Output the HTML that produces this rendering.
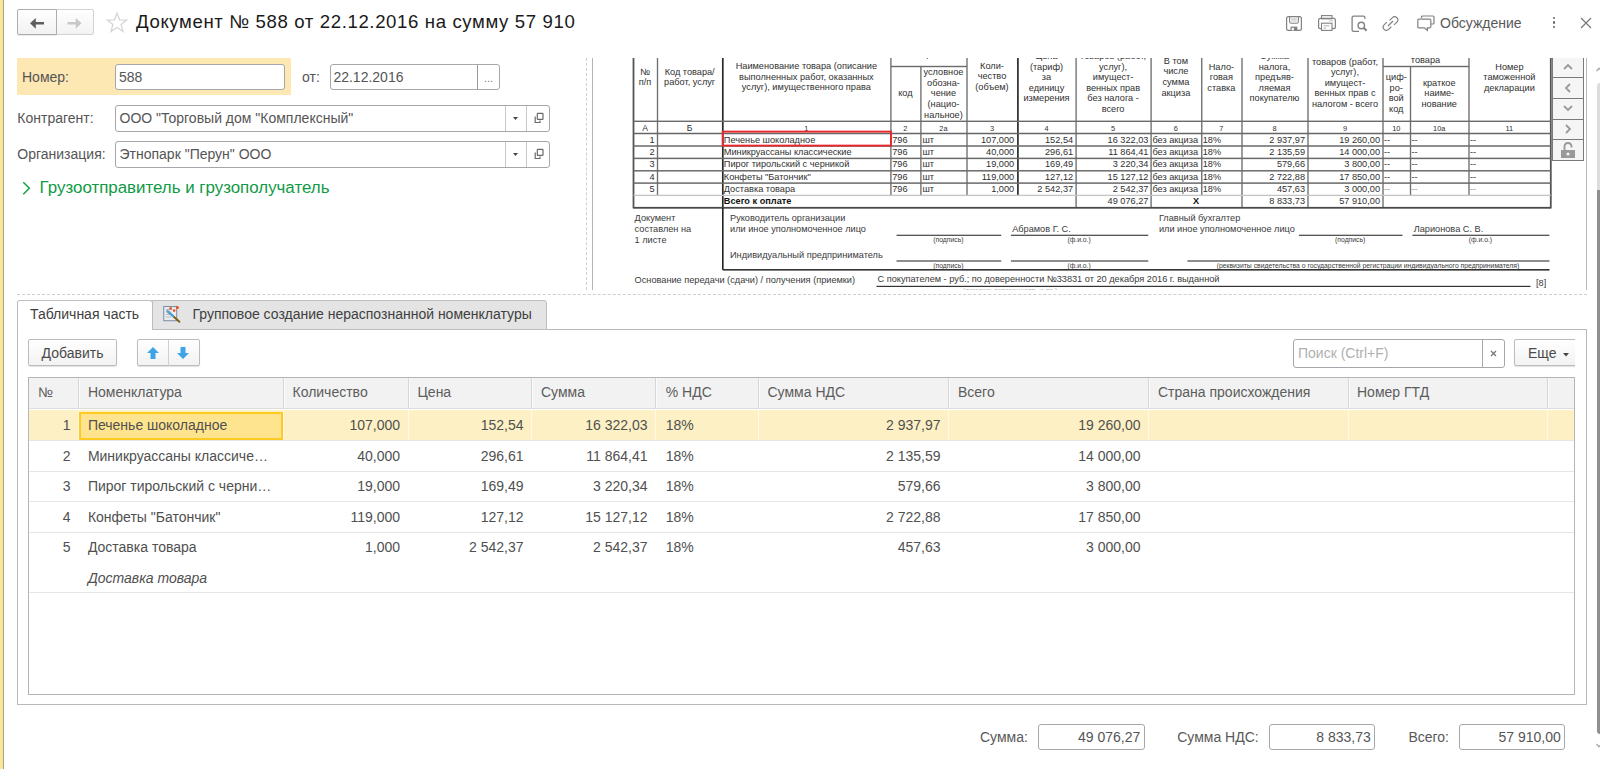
<!DOCTYPE html>
<html><head><meta charset="utf-8"><title>1C</title>
<style>
html,body{margin:0;padding:0;width:1600px;height:769px;overflow:hidden;background:#fff;}
body{position:relative;font-family:"Liberation Sans",sans-serif;}
.t{position:absolute;white-space:nowrap;}
.r{position:absolute;}
svg.r{display:block;overflow:visible;}
</style></head><body>
<div class="r" style="left:0.00px;top:0.00px;width:3.00px;height:769.00px;background:#fae796;"></div>
<div class="r" style="left:3.00px;top:0.00px;width:1.00px;height:769.00px;background:#a9a390;"></div>
<div class="r" style="left:55.50px;top:9.00px;width:38.50px;height:26.00px;border:1px solid #d2d2d2;background:linear-gradient(#ffffff,#f3f3f3);border-radius:2px;box-sizing:border-box;border-radius:0 2px 2px 0"></div>
<div class="r" style="left:17.00px;top:9.00px;width:40.00px;height:26.00px;border:1px solid #adadad;background:linear-gradient(#ffffff,#f1f1f1);border-radius:2px;box-sizing:border-box;border-radius:2px 0 0 2px;box-shadow:0 1px 0 rgba(0,0,0,0.08)"></div>
<svg class="r" style="left:29.8px;top:17.6px" width="15" height="11" viewBox="0 0 15 11"><path d="M0 5.3 L5.8 0 L5.8 4 L14 4 L14 6.6 L5.8 6.6 L5.8 10.7 Z" fill="#5e5e5e"/></svg>
<svg class="r" style="left:67px;top:17.6px" width="15" height="11" viewBox="0 0 15 11"><path d="M14.5 5.3 L8.7 0 L8.7 4 L0.5 4 L0.5 6.6 L8.7 6.6 L8.7 10.7 Z" fill="#c8c8c8"/></svg>
<svg class="r" style="left:106px;top:12px" width="22" height="21" viewBox="0 0 22 21"><path d="M11 1.2 L13.6 7.8 L20.6 8.1 L15.1 12.5 L17 19.4 L11 15.5 L5 19.4 L6.9 12.5 L1.4 8.1 L8.4 7.8 Z" fill="none" stroke="#d6d6d6" stroke-width="1.3"/></svg>
<div class="t" style="left:136.00px;top:13.36px;font-size:18.6px;line-height:18.6px;color:#1a1a1a;font-weight:normal;font-style:normal;letter-spacing:0.62px">Документ № 588 от 22.12.2016 на сумму 57 910</div>
<svg class="r" style="left:1286px;top:16px" width="16" height="15" viewBox="0 0 16 15"><rect x="0.6" y="0.6" width="14.8" height="13.8" rx="1.9" fill="none" stroke="#828282" stroke-width="1.2"/><path d="M3.6 0.6 V5.4 Q3.6 7.2 5.4 7.2 H10.6 Q12.4 7.2 12.4 5.4 V0.6" fill="none" stroke="#828282" stroke-width="1.1"/><rect x="5.2" y="2.4" width="5.6" height="1.2" fill="#bbb"/><rect x="5.2" y="4.6" width="5.6" height="0.9" fill="#bbb"/><rect x="4.6" y="10.6" width="6.8" height="3.8" fill="#828282"/><rect x="5.7" y="11.8" width="2.2" height="2.6" fill="#fff"/></svg>
<svg class="r" style="left:1318px;top:15px" width="18" height="16" viewBox="0 0 18 16"><rect x="3.5" y="0.6" width="10.5" height="3.2" fill="none" stroke="#828282" stroke-width="1.1"/><rect x="0.6" y="3.4" width="16.8" height="10.3" rx="1.9" fill="none" stroke="#828282" stroke-width="1.2"/><rect x="3.5" y="8.2" width="10.5" height="7.2" fill="#fff" stroke="#828282" stroke-width="1.1"/><rect x="5.5" y="10.4" width="6" height="0.9" fill="#aaa"/><rect x="5.5" y="12.7" width="2.6" height="0.9" fill="#aaa"/><rect x="11.2" y="5.4" width="4" height="0.9" fill="#bbb"/></svg>
<svg class="r" style="left:1351px;top:14.8px" width="18" height="18" viewBox="0 0 18 18"><path d="M8 16.4 H2.5 Q1.1 16.4 1.1 15 V2.6 Q1.1 1.2 2.5 1.2 H12.5 Q13.9 1.2 13.9 2.6 V4" fill="none" stroke="#828282" stroke-width="1.3"/><circle cx="10.3" cy="10.5" r="3.2" fill="none" stroke="#828282" stroke-width="1.4"/><path d="M12.6 12.8 L15.6 15.8" stroke="#828282" stroke-width="2"/></svg>
<svg class="r" style="left:1382px;top:14.6px" width="17" height="17" viewBox="0 0 17 17"><path d="M7.6 5.4 L10.2 2.8 Q12.6 0.4 14.9 2.7 Q17.1 4.9 14.7 7.3 L12.1 9.9" fill="none" stroke="#828282" stroke-width="1.2"/><path d="M9.4 11.6 L6.8 14.2 Q4.4 16.6 2.1 14.3 Q-0.1 12.1 2.3 9.7 L4.9 7.1" fill="none" stroke="#828282" stroke-width="1.2"/><path d="M6 11 L11 6" stroke="#828282" stroke-width="1.2"/></svg>
<svg class="r" style="left:1417px;top:14.8px" width="18" height="17" viewBox="0 0 18 17"><path d="M4.5 3 V2 Q4.5 1 5.5 1 H16 Q17 1 17 2 V8 Q17 9 16 9 H14" fill="none" stroke="#828282" stroke-width="1.2"/><path d="M1.8 4.2 H12.8 Q13.8 4.2 13.8 5.2 V11.8 Q13.8 12.8 12.8 12.8 H10.3 L10.3 15.5 L7.3 12.8 H1.8 Q0.8 12.8 0.8 11.8 V5.2 Q0.8 4.2 1.8 4.2 Z" fill="none" stroke="#828282" stroke-width="1.2"/></svg>
<div class="t" style="left:1440.00px;top:15.95px;font-size:14px;line-height:14px;color:#595959;font-weight:normal;font-style:normal;">Обсуждение</div>
<div class="r" style="left:1552.5px;top:16.8px;width:2.6px;height:2.6px;border-radius:50%;background:#666"></div>
<div class="r" style="left:1552.5px;top:21.3px;width:2.6px;height:2.6px;border-radius:50%;background:#666"></div>
<div class="r" style="left:1552.5px;top:25.8px;width:2.6px;height:2.6px;border-radius:50%;background:#666"></div>
<svg class="r" style="left:1580px;top:17px" width="12" height="12" viewBox="0 0 12 12"><path d="M1 1 L11 11 M11 1 L1 11" stroke="#777" stroke-width="1.2"/></svg>
<div class="r" style="left:17.00px;top:58.00px;width:274.00px;height:37.00px;background:#fde7b2;"></div>
<div class="t" style="left:22.00px;top:70.15px;font-size:14px;line-height:14px;color:#555555;font-weight:normal;font-style:normal;">Номер:</div>
<div class="r" style="left:115.00px;top:64.00px;width:170.00px;height:26.00px;border:1px solid #a4a7ac;background:#fff;border-radius:3px;box-sizing:border-box;"></div>
<div class="t" style="left:119.00px;top:70.15px;font-size:14px;line-height:14px;color:#555;font-weight:normal;font-style:normal;">588</div>
<div class="t" style="left:302.00px;top:70.15px;font-size:14px;line-height:14px;color:#555555;font-weight:normal;font-style:normal;">от:</div>
<div class="r" style="left:330.00px;top:64.00px;width:170.00px;height:26.00px;border:1px solid #a4a7ac;background:#fff;border-radius:3px;box-sizing:border-box;"></div>
<div class="r" style="left:477.00px;top:65.00px;width:1.00px;height:24.00px;background:#9a9a9a;"></div>
<div class="t" style="left:333.40px;top:70.15px;font-size:14px;line-height:14px;color:#555555;font-weight:normal;font-style:normal;">22.12.2016</div>
<div class="t" style="left:88.50px;width:800px;text-align:center;top:72.69px;font-size:11px;line-height:11px;color:#777;font-weight:normal;font-style:normal;">...</div>
<div class="t" style="left:17.30px;top:110.75px;font-size:14px;line-height:14px;color:#555555;font-weight:normal;font-style:normal;">Контрагент:</div>
<div class="r" style="left:115.00px;top:105.00px;width:434.50px;height:26.50px;border:1px solid #a4a7ac;background:#fff;border-radius:3px;box-sizing:border-box;"></div>
<div class="r" style="left:505.00px;top:106.00px;width:1.00px;height:24.50px;background:#c8c8c8;"></div>
<div class="r" style="left:526.30px;top:106.00px;width:1.00px;height:24.50px;background:#c8c8c8;"></div>
<div class="t" style="left:119.50px;top:110.75px;font-size:14px;line-height:14px;color:#555555;font-weight:normal;font-style:normal;">ООО "Торговый дом "Комплексный"</div>
<svg class="r" style="left:513px;top:116.5px" width="5" height="3" viewBox="0 0 5 3"><path d="M0 0 H5 L2.5 3 Z" fill="#444"/></svg>
<svg class="r" style="left:532px;top:112px" width="12" height="12" viewBox="0 0 12 12"><path d="M3.2 4.6 V10.5 H8 V8.4" fill="none" stroke="#6a6a6a" stroke-width="1.2"/><rect x="5.3" y="1.4" width="5.7" height="6" rx="0.6" fill="none" stroke="#6a6a6a" stroke-width="1.2"/></svg>
<div class="t" style="left:17.30px;top:146.75px;font-size:14px;line-height:14px;color:#555555;font-weight:normal;font-style:normal;">Организация:</div>
<div class="r" style="left:115.00px;top:141.00px;width:434.50px;height:26.50px;border:1px solid #a4a7ac;background:#fff;border-radius:3px;box-sizing:border-box;"></div>
<div class="r" style="left:505.00px;top:142.00px;width:1.00px;height:24.50px;background:#c8c8c8;"></div>
<div class="r" style="left:526.30px;top:142.00px;width:1.00px;height:24.50px;background:#c8c8c8;"></div>
<div class="t" style="left:119.50px;top:146.75px;font-size:14px;line-height:14px;color:#555555;font-weight:normal;font-style:normal;">Этнопарк "Перун" ООО</div>
<svg class="r" style="left:513px;top:152.5px" width="5" height="3" viewBox="0 0 5 3"><path d="M0 0 H5 L2.5 3 Z" fill="#444"/></svg>
<svg class="r" style="left:532px;top:148px" width="12" height="12" viewBox="0 0 12 12"><path d="M3.2 4.6 V10.5 H8 V8.4" fill="none" stroke="#6a6a6a" stroke-width="1.2"/><rect x="5.3" y="1.4" width="5.7" height="6" rx="0.6" fill="none" stroke="#6a6a6a" stroke-width="1.2"/></svg>
<svg class="r" style="left:21px;top:180.5px" width="11" height="15" viewBox="0 0 11 15"><path d="M2.3 1.3 L8.3 7.3 L2.3 13.3" fill="none" stroke="#14a04a" stroke-width="1.5"/></svg>
<div class="t" style="left:39.60px;top:179.69px;font-size:16.9px;line-height:16.9px;color:#0f9a45;font-weight:normal;font-style:normal;">Грузоотправитель и грузополучатель</div>
<div class="r" style="left:586px;top:58px;width:0;height:232px;border-left:1px dashed #cfcfcf"></div>
<div class="r" style="left:592.00px;top:58.00px;width:1.00px;height:232.00px;background:#b4b4b4;"></div>
<div class="r" style="left:1586.00px;top:58.00px;width:1.00px;height:232.00px;background:#b9b9b9;"></div>
<div class="r" style="left:17px;top:294px;width:1570px;height:0;border-top:1px dashed #cfcfcf"></div>
<div class="r" style="left:593.5px;top:58px;width:992.5px;height:232px;overflow:hidden">
<div class="t" style="left:-348.50px;width:800px;text-align:center;top:9.51px;font-size:9.2px;line-height:9.2px;color:#303030;font-weight:normal;font-style:normal;">№</div>
<div class="t" style="left:-348.50px;width:800px;text-align:center;top:20.11px;font-size:9.2px;line-height:9.2px;color:#303030;font-weight:normal;font-style:normal;">п/п</div>
<div class="t" style="left:-303.85px;width:800px;text-align:center;top:9.71px;font-size:9.2px;line-height:9.2px;color:#303030;font-weight:normal;font-style:normal;">Код товара/</div>
<div class="t" style="left:-303.85px;width:800px;text-align:center;top:20.31px;font-size:9.2px;line-height:9.2px;color:#303030;font-weight:normal;font-style:normal;">работ, услуг</div>
<div class="t" style="left:-187.15px;width:800px;text-align:center;top:3.86px;font-size:9.2px;line-height:9.2px;color:#303030;font-weight:normal;font-style:normal;">Наименование товара (описание</div>
<div class="t" style="left:-187.15px;width:800px;text-align:center;top:14.51px;font-size:9.2px;line-height:9.2px;color:#303030;font-weight:normal;font-style:normal;">выполненных работ, оказанных</div>
<div class="t" style="left:-187.15px;width:800px;text-align:center;top:25.11px;font-size:9.2px;line-height:9.2px;color:#303030;font-weight:normal;font-style:normal;">услуг), имущественного права</div>
<div class="t" style="left:-88.10px;width:800px;text-align:center;top:31.36px;font-size:9.2px;line-height:9.2px;color:#303030;font-weight:normal;font-style:normal;">код</div>
<div class="t" style="left:-50.05px;width:800px;text-align:center;top:10.11px;font-size:9.2px;line-height:9.2px;color:#303030;font-weight:normal;font-style:normal;">условное</div>
<div class="t" style="left:-50.05px;width:800px;text-align:center;top:20.74px;font-size:9.2px;line-height:9.2px;color:#303030;font-weight:normal;font-style:normal;">обозна-</div>
<div class="t" style="left:-50.05px;width:800px;text-align:center;top:31.37px;font-size:9.2px;line-height:9.2px;color:#303030;font-weight:normal;font-style:normal;">чение</div>
<div class="t" style="left:-50.05px;width:800px;text-align:center;top:42.00px;font-size:9.2px;line-height:9.2px;color:#303030;font-weight:normal;font-style:normal;">(нацио-</div>
<div class="t" style="left:-50.05px;width:800px;text-align:center;top:52.63px;font-size:9.2px;line-height:9.2px;color:#303030;font-weight:normal;font-style:normal;">нальное)</div>
<div class="t" style="left:-1.55px;width:800px;text-align:center;top:3.86px;font-size:9.2px;line-height:9.2px;color:#303030;font-weight:normal;font-style:normal;">Коли-</div>
<div class="t" style="left:-1.55px;width:800px;text-align:center;top:14.49px;font-size:9.2px;line-height:9.2px;color:#303030;font-weight:normal;font-style:normal;">чество</div>
<div class="t" style="left:-1.55px;width:800px;text-align:center;top:25.12px;font-size:9.2px;line-height:9.2px;color:#303030;font-weight:normal;font-style:normal;">(объем)</div>
<div class="t" style="left:53.00px;width:800px;text-align:center;top:-6.09px;font-size:9.2px;line-height:9.2px;color:#303030;font-weight:normal;font-style:normal;">Цена</div>
<div class="t" style="left:53.00px;width:800px;text-align:center;top:4.54px;font-size:9.2px;line-height:9.2px;color:#303030;font-weight:normal;font-style:normal;">(тариф)</div>
<div class="t" style="left:53.00px;width:800px;text-align:center;top:15.17px;font-size:9.2px;line-height:9.2px;color:#303030;font-weight:normal;font-style:normal;">за</div>
<div class="t" style="left:53.00px;width:800px;text-align:center;top:25.80px;font-size:9.2px;line-height:9.2px;color:#303030;font-weight:normal;font-style:normal;">единицу</div>
<div class="t" style="left:53.00px;width:800px;text-align:center;top:36.43px;font-size:9.2px;line-height:9.2px;color:#303030;font-weight:normal;font-style:normal;">измерения</div>
<div class="t" style="left:119.60px;width:800px;text-align:center;top:-6.09px;font-size:9.2px;line-height:9.2px;color:#303030;font-weight:normal;font-style:normal;">товаров (работ,</div>
<div class="t" style="left:119.60px;width:800px;text-align:center;top:4.54px;font-size:9.2px;line-height:9.2px;color:#303030;font-weight:normal;font-style:normal;">услуг),</div>
<div class="t" style="left:119.60px;width:800px;text-align:center;top:15.17px;font-size:9.2px;line-height:9.2px;color:#303030;font-weight:normal;font-style:normal;">имущест-</div>
<div class="t" style="left:119.60px;width:800px;text-align:center;top:25.80px;font-size:9.2px;line-height:9.2px;color:#303030;font-weight:normal;font-style:normal;">венных прав</div>
<div class="t" style="left:119.60px;width:800px;text-align:center;top:36.43px;font-size:9.2px;line-height:9.2px;color:#303030;font-weight:normal;font-style:normal;">без налога -</div>
<div class="t" style="left:119.60px;width:800px;text-align:center;top:47.06px;font-size:9.2px;line-height:9.2px;color:#303030;font-weight:normal;font-style:normal;">всего</div>
<div class="t" style="left:182.42px;width:800px;text-align:center;top:-1.14px;font-size:9.2px;line-height:9.2px;color:#303030;font-weight:normal;font-style:normal;">В том</div>
<div class="t" style="left:182.42px;width:800px;text-align:center;top:9.49px;font-size:9.2px;line-height:9.2px;color:#303030;font-weight:normal;font-style:normal;">числе</div>
<div class="t" style="left:182.42px;width:800px;text-align:center;top:20.12px;font-size:9.2px;line-height:9.2px;color:#303030;font-weight:normal;font-style:normal;">сумма</div>
<div class="t" style="left:182.42px;width:800px;text-align:center;top:30.75px;font-size:9.2px;line-height:9.2px;color:#303030;font-weight:normal;font-style:normal;">акциза</div>
<div class="t" style="left:227.88px;width:800px;text-align:center;top:4.51px;font-size:9.2px;line-height:9.2px;color:#303030;font-weight:normal;font-style:normal;">Нало-</div>
<div class="t" style="left:227.88px;width:800px;text-align:center;top:15.14px;font-size:9.2px;line-height:9.2px;color:#303030;font-weight:normal;font-style:normal;">говая</div>
<div class="t" style="left:227.88px;width:800px;text-align:center;top:25.77px;font-size:9.2px;line-height:9.2px;color:#303030;font-weight:normal;font-style:normal;">ставка</div>
<div class="t" style="left:281.00px;width:800px;text-align:center;top:-6.09px;font-size:9.2px;line-height:9.2px;color:#303030;font-weight:normal;font-style:normal;">Сумма</div>
<div class="t" style="left:281.00px;width:800px;text-align:center;top:4.54px;font-size:9.2px;line-height:9.2px;color:#303030;font-weight:normal;font-style:normal;">налога,</div>
<div class="t" style="left:281.00px;width:800px;text-align:center;top:15.17px;font-size:9.2px;line-height:9.2px;color:#303030;font-weight:normal;font-style:normal;">предъяв-</div>
<div class="t" style="left:281.00px;width:800px;text-align:center;top:25.80px;font-size:9.2px;line-height:9.2px;color:#303030;font-weight:normal;font-style:normal;">ляемая</div>
<div class="t" style="left:281.00px;width:800px;text-align:center;top:36.43px;font-size:9.2px;line-height:9.2px;color:#303030;font-weight:normal;font-style:normal;">покупателю</div>
<div class="t" style="left:351.50px;width:800px;text-align:center;top:-0.49px;font-size:9.2px;line-height:9.2px;color:#303030;font-weight:normal;font-style:normal;">товаров (работ,</div>
<div class="t" style="left:351.50px;width:800px;text-align:center;top:10.14px;font-size:9.2px;line-height:9.2px;color:#303030;font-weight:normal;font-style:normal;">услуг),</div>
<div class="t" style="left:351.50px;width:800px;text-align:center;top:20.77px;font-size:9.2px;line-height:9.2px;color:#303030;font-weight:normal;font-style:normal;">имущест-</div>
<div class="t" style="left:351.50px;width:800px;text-align:center;top:31.40px;font-size:9.2px;line-height:9.2px;color:#303030;font-weight:normal;font-style:normal;">венных прав с</div>
<div class="t" style="left:351.50px;width:800px;text-align:center;top:42.03px;font-size:9.2px;line-height:9.2px;color:#303030;font-weight:normal;font-style:normal;">налогом - всего</div>
<div class="t" style="left:432.00px;width:800px;text-align:center;top:-2.39px;font-size:9.2px;line-height:9.2px;color:#303030;font-weight:normal;font-style:normal;">товара</div>
<div class="t" style="left:-65.05px;width:800px;text-align:center;top:-7.59px;font-size:9.2px;line-height:9.2px;color:#303030;font-weight:normal;font-style:normal;">измерения</div>
<div class="t" style="left:402.75px;width:800px;text-align:center;top:15.11px;font-size:9.2px;line-height:9.2px;color:#303030;font-weight:normal;font-style:normal;">циф-</div>
<div class="t" style="left:402.75px;width:800px;text-align:center;top:25.74px;font-size:9.2px;line-height:9.2px;color:#303030;font-weight:normal;font-style:normal;">ро-</div>
<div class="t" style="left:402.75px;width:800px;text-align:center;top:36.37px;font-size:9.2px;line-height:9.2px;color:#303030;font-weight:normal;font-style:normal;">вой</div>
<div class="t" style="left:402.75px;width:800px;text-align:center;top:47.00px;font-size:9.2px;line-height:9.2px;color:#303030;font-weight:normal;font-style:normal;">код</div>
<div class="t" style="left:445.75px;width:800px;text-align:center;top:20.71px;font-size:9.2px;line-height:9.2px;color:#303030;font-weight:normal;font-style:normal;">краткое</div>
<div class="t" style="left:445.75px;width:800px;text-align:center;top:31.34px;font-size:9.2px;line-height:9.2px;color:#303030;font-weight:normal;font-style:normal;">наиме-</div>
<div class="t" style="left:445.75px;width:800px;text-align:center;top:41.97px;font-size:9.2px;line-height:9.2px;color:#303030;font-weight:normal;font-style:normal;">нование</div>
<div class="t" style="left:515.90px;width:800px;text-align:center;top:4.51px;font-size:9.2px;line-height:9.2px;color:#303030;font-weight:normal;font-style:normal;">Номер</div>
<div class="t" style="left:515.90px;width:800px;text-align:center;top:15.14px;font-size:9.2px;line-height:9.2px;color:#303030;font-weight:normal;font-style:normal;">таможенной</div>
<div class="t" style="left:515.90px;width:800px;text-align:center;top:25.77px;font-size:9.2px;line-height:9.2px;color:#303030;font-weight:normal;font-style:normal;">декларации</div>
<div class="t" style="left:-348.50px;width:800px;text-align:center;top:65.82px;font-size:8.6px;line-height:8.6px;color:#303030;font-weight:normal;font-style:normal;">А</div>
<div class="t" style="left:-303.85px;width:800px;text-align:center;top:65.82px;font-size:8.6px;line-height:8.6px;color:#303030;font-weight:normal;font-style:normal;">Б</div>
<div class="t" style="left:-187.15px;width:800px;text-align:center;top:66.84px;font-size:7.4px;line-height:7.4px;color:#303030;font-weight:normal;font-style:normal;">1</div>
<div class="t" style="left:-88.10px;width:800px;text-align:center;top:66.84px;font-size:7.4px;line-height:7.4px;color:#303030;font-weight:normal;font-style:normal;">2</div>
<div class="t" style="left:-50.05px;width:800px;text-align:center;top:66.84px;font-size:7.4px;line-height:7.4px;color:#303030;font-weight:normal;font-style:normal;">2а</div>
<div class="t" style="left:-1.55px;width:800px;text-align:center;top:66.84px;font-size:7.4px;line-height:7.4px;color:#303030;font-weight:normal;font-style:normal;">3</div>
<div class="t" style="left:53.00px;width:800px;text-align:center;top:66.84px;font-size:7.4px;line-height:7.4px;color:#303030;font-weight:normal;font-style:normal;">4</div>
<div class="t" style="left:119.60px;width:800px;text-align:center;top:66.84px;font-size:7.4px;line-height:7.4px;color:#303030;font-weight:normal;font-style:normal;">5</div>
<div class="t" style="left:182.42px;width:800px;text-align:center;top:66.84px;font-size:7.4px;line-height:7.4px;color:#303030;font-weight:normal;font-style:normal;">6</div>
<div class="t" style="left:227.88px;width:800px;text-align:center;top:66.84px;font-size:7.4px;line-height:7.4px;color:#303030;font-weight:normal;font-style:normal;">7</div>
<div class="t" style="left:281.00px;width:800px;text-align:center;top:66.84px;font-size:7.4px;line-height:7.4px;color:#303030;font-weight:normal;font-style:normal;">8</div>
<div class="t" style="left:351.50px;width:800px;text-align:center;top:66.84px;font-size:7.4px;line-height:7.4px;color:#303030;font-weight:normal;font-style:normal;">9</div>
<div class="t" style="left:402.75px;width:800px;text-align:center;top:66.84px;font-size:7.4px;line-height:7.4px;color:#303030;font-weight:normal;font-style:normal;">10</div>
<div class="t" style="left:445.75px;width:800px;text-align:center;top:66.84px;font-size:7.4px;line-height:7.4px;color:#303030;font-weight:normal;font-style:normal;">10а</div>
<div class="t" style="left:515.90px;width:800px;text-align:center;top:66.84px;font-size:7.4px;line-height:7.4px;color:#303030;font-weight:normal;font-style:normal;">11</div>
<div class="t" style="right:931.50px;top:77.51px;font-size:9.2px;line-height:9.2px;color:#303030;font-weight:normal;font-style:normal;">1</div>
<div class="t" style="left:130.30px;top:77.51px;font-size:9.2px;line-height:9.2px;color:#303030;font-weight:normal;font-style:normal;">Печенье шоколадное</div>
<div class="t" style="left:298.70px;top:77.51px;font-size:9.2px;line-height:9.2px;color:#303030;font-weight:normal;font-style:normal;">796</div>
<div class="t" style="left:328.90px;top:77.51px;font-size:9.2px;line-height:9.2px;color:#303030;font-weight:normal;font-style:normal;">шт</div>
<div class="t" style="right:571.80px;top:77.51px;font-size:9.2px;line-height:9.2px;color:#303030;font-weight:normal;font-style:normal;">107,000</div>
<div class="t" style="right:512.90px;top:77.51px;font-size:9.2px;line-height:9.2px;color:#303030;font-weight:normal;font-style:normal;">152,54</div>
<div class="t" style="right:437.60px;top:77.51px;font-size:9.2px;line-height:9.2px;color:#303030;font-weight:normal;font-style:normal;">16 322,03</div>
<div class="t" style="left:558.90px;top:77.51px;font-size:9.2px;line-height:9.2px;color:#303030;font-weight:normal;font-style:normal;">без акциза</div>
<div class="t" style="left:609.25px;top:77.51px;font-size:9.2px;line-height:9.2px;color:#303030;font-weight:normal;font-style:normal;">18%</div>
<div class="t" style="right:281.00px;top:77.51px;font-size:9.2px;line-height:9.2px;color:#303030;font-weight:normal;font-style:normal;">2 937,97</div>
<div class="t" style="right:206.00px;top:77.51px;font-size:9.2px;line-height:9.2px;color:#303030;font-weight:normal;font-style:normal;">19 260,00</div>
<div class="t" style="left:790.50px;top:77.51px;font-size:9.2px;line-height:9.2px;color:#303030;font-weight:normal;font-style:normal;">--</div>
<div class="t" style="left:818.00px;top:77.51px;font-size:9.2px;line-height:9.2px;color:#303030;font-weight:normal;font-style:normal;">--</div>
<div class="t" style="left:876.50px;top:77.51px;font-size:9.2px;line-height:9.2px;color:#303030;font-weight:normal;font-style:normal;">--</div>
<div class="t" style="right:931.50px;top:89.91px;font-size:9.2px;line-height:9.2px;color:#303030;font-weight:normal;font-style:normal;">2</div>
<div class="t" style="left:130.30px;top:89.91px;font-size:9.2px;line-height:9.2px;color:#303030;font-weight:normal;font-style:normal;">Миникруассаны классические</div>
<div class="t" style="left:298.70px;top:89.91px;font-size:9.2px;line-height:9.2px;color:#303030;font-weight:normal;font-style:normal;">796</div>
<div class="t" style="left:328.90px;top:89.91px;font-size:9.2px;line-height:9.2px;color:#303030;font-weight:normal;font-style:normal;">шт</div>
<div class="t" style="right:571.80px;top:89.91px;font-size:9.2px;line-height:9.2px;color:#303030;font-weight:normal;font-style:normal;">40,000</div>
<div class="t" style="right:512.90px;top:89.91px;font-size:9.2px;line-height:9.2px;color:#303030;font-weight:normal;font-style:normal;">296,61</div>
<div class="t" style="right:437.60px;top:89.91px;font-size:9.2px;line-height:9.2px;color:#303030;font-weight:normal;font-style:normal;">11 864,41</div>
<div class="t" style="left:558.90px;top:89.91px;font-size:9.2px;line-height:9.2px;color:#303030;font-weight:normal;font-style:normal;">без акциза</div>
<div class="t" style="left:609.25px;top:89.91px;font-size:9.2px;line-height:9.2px;color:#303030;font-weight:normal;font-style:normal;">18%</div>
<div class="t" style="right:281.00px;top:89.91px;font-size:9.2px;line-height:9.2px;color:#303030;font-weight:normal;font-style:normal;">2 135,59</div>
<div class="t" style="right:206.00px;top:89.91px;font-size:9.2px;line-height:9.2px;color:#303030;font-weight:normal;font-style:normal;">14 000,00</div>
<div class="t" style="left:790.50px;top:89.91px;font-size:9.2px;line-height:9.2px;color:#303030;font-weight:normal;font-style:normal;">--</div>
<div class="t" style="left:818.00px;top:89.91px;font-size:9.2px;line-height:9.2px;color:#303030;font-weight:normal;font-style:normal;">--</div>
<div class="t" style="left:876.50px;top:89.91px;font-size:9.2px;line-height:9.2px;color:#303030;font-weight:normal;font-style:normal;">--</div>
<div class="t" style="right:931.50px;top:102.31px;font-size:9.2px;line-height:9.2px;color:#303030;font-weight:normal;font-style:normal;">3</div>
<div class="t" style="left:130.30px;top:102.31px;font-size:9.2px;line-height:9.2px;color:#303030;font-weight:normal;font-style:normal;">Пирог тирольский с черникой</div>
<div class="t" style="left:298.70px;top:102.31px;font-size:9.2px;line-height:9.2px;color:#303030;font-weight:normal;font-style:normal;">796</div>
<div class="t" style="left:328.90px;top:102.31px;font-size:9.2px;line-height:9.2px;color:#303030;font-weight:normal;font-style:normal;">шт</div>
<div class="t" style="right:571.80px;top:102.31px;font-size:9.2px;line-height:9.2px;color:#303030;font-weight:normal;font-style:normal;">19,000</div>
<div class="t" style="right:512.90px;top:102.31px;font-size:9.2px;line-height:9.2px;color:#303030;font-weight:normal;font-style:normal;">169,49</div>
<div class="t" style="right:437.60px;top:102.31px;font-size:9.2px;line-height:9.2px;color:#303030;font-weight:normal;font-style:normal;">3 220,34</div>
<div class="t" style="left:558.90px;top:102.31px;font-size:9.2px;line-height:9.2px;color:#303030;font-weight:normal;font-style:normal;">без акциза</div>
<div class="t" style="left:609.25px;top:102.31px;font-size:9.2px;line-height:9.2px;color:#303030;font-weight:normal;font-style:normal;">18%</div>
<div class="t" style="right:281.00px;top:102.31px;font-size:9.2px;line-height:9.2px;color:#303030;font-weight:normal;font-style:normal;">579,66</div>
<div class="t" style="right:206.00px;top:102.31px;font-size:9.2px;line-height:9.2px;color:#303030;font-weight:normal;font-style:normal;">3 800,00</div>
<div class="t" style="left:790.50px;top:102.31px;font-size:9.2px;line-height:9.2px;color:#303030;font-weight:normal;font-style:normal;">--</div>
<div class="t" style="left:818.00px;top:102.31px;font-size:9.2px;line-height:9.2px;color:#303030;font-weight:normal;font-style:normal;">--</div>
<div class="t" style="left:876.50px;top:102.31px;font-size:9.2px;line-height:9.2px;color:#303030;font-weight:normal;font-style:normal;">--</div>
<div class="t" style="right:931.50px;top:114.61px;font-size:9.2px;line-height:9.2px;color:#303030;font-weight:normal;font-style:normal;">4</div>
<div class="t" style="left:130.30px;top:114.61px;font-size:9.2px;line-height:9.2px;color:#303030;font-weight:normal;font-style:normal;">Конфеты "Батончик"</div>
<div class="t" style="left:298.70px;top:114.61px;font-size:9.2px;line-height:9.2px;color:#303030;font-weight:normal;font-style:normal;">796</div>
<div class="t" style="left:328.90px;top:114.61px;font-size:9.2px;line-height:9.2px;color:#303030;font-weight:normal;font-style:normal;">шт</div>
<div class="t" style="right:571.80px;top:114.61px;font-size:9.2px;line-height:9.2px;color:#303030;font-weight:normal;font-style:normal;">119,000</div>
<div class="t" style="right:512.90px;top:114.61px;font-size:9.2px;line-height:9.2px;color:#303030;font-weight:normal;font-style:normal;">127,12</div>
<div class="t" style="right:437.60px;top:114.61px;font-size:9.2px;line-height:9.2px;color:#303030;font-weight:normal;font-style:normal;">15 127,12</div>
<div class="t" style="left:558.90px;top:114.61px;font-size:9.2px;line-height:9.2px;color:#303030;font-weight:normal;font-style:normal;">без акциза</div>
<div class="t" style="left:609.25px;top:114.61px;font-size:9.2px;line-height:9.2px;color:#303030;font-weight:normal;font-style:normal;">18%</div>
<div class="t" style="right:281.00px;top:114.61px;font-size:9.2px;line-height:9.2px;color:#303030;font-weight:normal;font-style:normal;">2 722,88</div>
<div class="t" style="right:206.00px;top:114.61px;font-size:9.2px;line-height:9.2px;color:#303030;font-weight:normal;font-style:normal;">17 850,00</div>
<div class="t" style="left:790.50px;top:114.61px;font-size:9.2px;line-height:9.2px;color:#303030;font-weight:normal;font-style:normal;">--</div>
<div class="t" style="left:818.00px;top:114.61px;font-size:9.2px;line-height:9.2px;color:#303030;font-weight:normal;font-style:normal;">--</div>
<div class="t" style="left:876.50px;top:114.61px;font-size:9.2px;line-height:9.2px;color:#303030;font-weight:normal;font-style:normal;">--</div>
<div class="t" style="right:931.50px;top:126.91px;font-size:9.2px;line-height:9.2px;color:#303030;font-weight:normal;font-style:normal;">5</div>
<div class="t" style="left:130.30px;top:126.91px;font-size:9.2px;line-height:9.2px;color:#303030;font-weight:normal;font-style:normal;">Доставка товара</div>
<div class="t" style="left:298.70px;top:126.91px;font-size:9.2px;line-height:9.2px;color:#303030;font-weight:normal;font-style:normal;">796</div>
<div class="t" style="left:328.90px;top:126.91px;font-size:9.2px;line-height:9.2px;color:#303030;font-weight:normal;font-style:normal;">шт</div>
<div class="t" style="right:571.80px;top:126.91px;font-size:9.2px;line-height:9.2px;color:#303030;font-weight:normal;font-style:normal;">1,000</div>
<div class="t" style="right:512.90px;top:126.91px;font-size:9.2px;line-height:9.2px;color:#303030;font-weight:normal;font-style:normal;">2 542,37</div>
<div class="t" style="right:437.60px;top:126.91px;font-size:9.2px;line-height:9.2px;color:#303030;font-weight:normal;font-style:normal;">2 542,37</div>
<div class="t" style="left:558.90px;top:126.91px;font-size:9.2px;line-height:9.2px;color:#303030;font-weight:normal;font-style:normal;">без акциза</div>
<div class="t" style="left:609.25px;top:126.91px;font-size:9.2px;line-height:9.2px;color:#303030;font-weight:normal;font-style:normal;">18%</div>
<div class="t" style="right:281.00px;top:126.91px;font-size:9.2px;line-height:9.2px;color:#303030;font-weight:normal;font-style:normal;">457,63</div>
<div class="t" style="right:206.00px;top:126.91px;font-size:9.2px;line-height:9.2px;color:#303030;font-weight:normal;font-style:normal;">3 000,00</div>
<div class="t" style="left:790.50px;top:126.91px;font-size:9.2px;line-height:9.2px;color:#999;font-weight:normal;font-style:normal;">--</div>
<div class="t" style="left:818.00px;top:126.91px;font-size:9.2px;line-height:9.2px;color:#999;font-weight:normal;font-style:normal;">--</div>
<div class="t" style="left:876.50px;top:126.91px;font-size:9.2px;line-height:9.2px;color:#999;font-weight:normal;font-style:normal;">--</div>
<div class="t" style="left:130.30px;top:139.31px;font-size:9.2px;line-height:9.2px;color:#111;font-weight:bold;font-style:normal;">Всего к оплате</div>
<div class="t" style="right:437.60px;top:139.31px;font-size:9.2px;line-height:9.2px;color:#303030;font-weight:normal;font-style:normal;">49 076,27</div>
<div class="t" style="left:202.55px;width:800px;text-align:center;top:139.31px;font-size:9.2px;line-height:9.2px;color:#111;font-weight:bold;font-style:normal;">X</div>
<div class="t" style="right:281.00px;top:139.31px;font-size:9.2px;line-height:9.2px;color:#303030;font-weight:normal;font-style:normal;">8 833,73</div>
<div class="t" style="right:206.00px;top:139.31px;font-size:9.2px;line-height:9.2px;color:#303030;font-weight:normal;font-style:normal;">57 910,00</div>
<div class="t" style="left:41.10px;top:156.21px;font-size:9.2px;line-height:9.2px;color:#3a3a3a;font-weight:normal;font-style:normal;">Документ</div>
<div class="t" style="left:41.10px;top:166.96px;font-size:9.2px;line-height:9.2px;color:#3a3a3a;font-weight:normal;font-style:normal;">составлен на</div>
<div class="t" style="left:41.10px;top:177.71px;font-size:9.2px;line-height:9.2px;color:#3a3a3a;font-weight:normal;font-style:normal;">1 листе</div>
<div class="t" style="left:136.50px;top:156.21px;font-size:9.2px;line-height:9.2px;color:#3a3a3a;font-weight:normal;font-style:normal;">Руководитель организации</div>
<div class="t" style="left:136.50px;top:167.21px;font-size:9.2px;line-height:9.2px;color:#3a3a3a;font-weight:normal;font-style:normal;">или иное уполномоченное лицо</div>
<div class="t" style="left:136.50px;top:192.61px;font-size:9.2px;line-height:9.2px;color:#3a3a3a;font-weight:normal;font-style:normal;">Индивидуальный предприниматель</div>
<div class="t" style="left:565.40px;top:156.21px;font-size:9.2px;line-height:9.2px;color:#3a3a3a;font-weight:normal;font-style:normal;">Главный бухгалтер</div>
<div class="t" style="left:565.40px;top:167.21px;font-size:9.2px;line-height:9.2px;color:#3a3a3a;font-weight:normal;font-style:normal;">или иное уполномоченное лицо</div>
<div class="t" style="left:-45.12px;width:800px;text-align:center;top:179.04px;font-size:6.8px;line-height:6.8px;color:#3a3a3a;font-weight:normal;font-style:normal;">(подпись)</div>
<div class="t" style="left:85.58px;width:800px;text-align:center;top:179.04px;font-size:6.8px;line-height:6.8px;color:#3a3a3a;font-weight:normal;font-style:normal;">(ф.и.о.)</div>
<div class="t" style="left:418.70px;top:167.41px;font-size:9.2px;line-height:9.2px;color:#3a3a3a;font-weight:normal;font-style:normal;">Абрамов Г. С.</div>
<div class="t" style="left:356.70px;width:800px;text-align:center;top:179.04px;font-size:6.8px;line-height:6.8px;color:#3a3a3a;font-weight:normal;font-style:normal;">(подпись)</div>
<div class="t" style="left:486.90px;width:800px;text-align:center;top:179.04px;font-size:6.8px;line-height:6.8px;color:#3a3a3a;font-weight:normal;font-style:normal;">(ф.и.о.)</div>
<div class="t" style="left:820.20px;top:167.41px;font-size:9.2px;line-height:9.2px;color:#3a3a3a;font-weight:normal;font-style:normal;">Ларионова С. В.</div>
<div class="t" style="left:-45.12px;width:800px;text-align:center;top:204.74px;font-size:6.8px;line-height:6.8px;color:#3a3a3a;font-weight:normal;font-style:normal;">(подпись)</div>
<div class="t" style="left:85.58px;width:800px;text-align:center;top:204.74px;font-size:6.8px;line-height:6.8px;color:#3a3a3a;font-weight:normal;font-style:normal;">(ф.и.о.)</div>
<div class="t" style="left:374.45px;width:800px;text-align:center;top:204.74px;font-size:6.8px;line-height:6.8px;color:#3a3a3a;font-weight:normal;font-style:normal;">(реквизиты свидетельства о государственной  регистрации индивидуального предпринимателя)</div>
<div class="t" style="left:41.10px;top:218.01px;font-size:9.2px;line-height:9.2px;color:#3a3a3a;font-weight:normal;font-style:normal;">Основание передачи (сдачи) / получения (приемки)</div>
<div class="t" style="left:284.00px;top:217.41px;font-size:9.2px;line-height:9.2px;color:#3a3a3a;font-weight:normal;font-style:normal;">С покупателем - руб.; по доверенности №33831 от 20 декабря 2016 г. выданной</div>
<div class="t" style="left:942.50px;top:220.61px;font-size:9.2px;line-height:9.2px;color:#3a3a3a;font-weight:normal;font-style:normal;">[8]</div>
<div class="t" style="left:16.50px;width:800px;text-align:center;top:229.64px;font-size:6.8px;line-height:6.8px;color:#b0b0b0;font-weight:normal;font-style:normal;">(договор; доверенность и др.)</div>
<svg style="position:absolute;left:0;top:0" width="992.5" height="232" shape-rendering="geometricPrecision"><rect x="38.60" y="-8.00" width="1.80" height="158.40" fill="#555"/><rect x="62.83" y="-8.00" width="1.35" height="145.40" fill="#6e6e6e"/><rect x="127.95" y="-8.00" width="1.70" height="157.80" fill="#2a2a2a"/><rect x="296.23" y="-8.00" width="1.35" height="145.40" fill="#6e6e6e"/><rect x="326.23" y="8.50" width="1.35" height="128.90" fill="#6e6e6e"/><rect x="372.33" y="-8.00" width="1.35" height="145.40" fill="#6e6e6e"/><rect x="423.05" y="-8.00" width="1.70" height="145.40" fill="#2a2a2a"/><rect x="481.42" y="-8.00" width="1.35" height="157.80" fill="#6e6e6e"/><rect x="556.42" y="-8.00" width="1.35" height="157.80" fill="#6e6e6e"/><rect x="607.08" y="-8.00" width="1.35" height="145.40" fill="#6e6e6e"/><rect x="647.33" y="-8.00" width="1.35" height="157.80" fill="#6e6e6e"/><rect x="713.33" y="-8.00" width="1.35" height="157.80" fill="#6e6e6e"/><rect x="788.33" y="-8.00" width="1.35" height="157.80" fill="#6e6e6e"/><rect x="815.83" y="8.50" width="1.35" height="128.90" fill="#6e6e6e"/><rect x="874.33" y="-8.00" width="1.35" height="145.40" fill="#6e6e6e"/><rect x="955.90" y="-8.00" width="1.80" height="158.40" fill="#555"/><rect x="296.90" y="7.80" width="76.10" height="1.40" fill="#6a6a6a"/><rect x="789.00" y="7.80" width="86.00" height="1.40" fill="#6a6a6a"/><rect x="39.50" y="62.60" width="917.30" height="1.40" fill="#6a6a6a"/><rect x="39.50" y="74.75" width="917.30" height="1.50" fill="#666"/><rect x="39.50" y="87.25" width="917.30" height="1.50" fill="#6a6a6a"/><rect x="39.50" y="99.65" width="917.30" height="1.50" fill="#6a6a6a"/><rect x="39.50" y="112.05" width="917.30" height="1.50" fill="#6a6a6a"/><rect x="39.50" y="124.35" width="917.30" height="1.50" fill="#6a6a6a"/><rect x="39.50" y="136.75" width="917.30" height="1.30" fill="#c4c4c4"/><rect x="39.50" y="148.90" width="917.30" height="1.80" fill="#4a4a4a"/><rect x="128.00" y="149.80" width="1.60" height="62.00" fill="#222"/><rect x="128.80" y="211.00" width="826.70" height="1.60" fill="#333"/><rect x="302.50" y="176.70" width="104.75" height="1.20" fill="#444"/><rect x="416.90" y="176.70" width="137.35" height="1.20" fill="#444"/><rect x="704.90" y="176.70" width="103.60" height="1.20" fill="#444"/><rect x="818.40" y="176.70" width="137.00" height="1.20" fill="#444"/><rect x="302.50" y="202.40" width="104.75" height="1.20" fill="#444"/><rect x="416.90" y="202.40" width="137.35" height="1.20" fill="#444"/><rect x="593.40" y="202.40" width="362.10" height="1.20" fill="#444"/><rect x="282.50" y="227.80" width="654.00" height="1.20" fill="#333"/><rect x="128.70" y="73.60" width="168.30" height="14.00" fill="none" stroke="#e8262b" stroke-width="1.9"/></svg>
</div>
<div class="r" style="left:1552.00px;top:58.00px;width:32.00px;height:20.00px;border:1px solid #7a7a7a;background:#f5f5f5;border-radius:0px;box-sizing:border-box;border-top:none"></div>
<div class="r" style="left:1552.00px;top:77.00px;width:32.00px;height:21.50px;border:1px solid #7a7a7a;background:#f5f5f5;border-radius:0px;box-sizing:border-box;"></div>
<div class="r" style="left:1552.00px;top:97.50px;width:32.00px;height:22.00px;border:1px solid #7a7a7a;background:#f5f5f5;border-radius:0px;box-sizing:border-box;"></div>
<div class="r" style="left:1552.00px;top:118.50px;width:32.00px;height:21.70px;border:1px solid #7a7a7a;background:#f5f5f5;border-radius:0px;box-sizing:border-box;"></div>
<div class="r" style="left:1552.00px;top:139.20px;width:32.00px;height:22.10px;border:1px solid #7a7a7a;background:#f5f5f5;border-radius:0px;box-sizing:border-box;"></div>
<svg class="r" style="left:1562px;top:62px" width="12" height="10" viewBox="0 0 12 10"><path d="M2 7 L6 3 L10 7" fill="none" stroke="#9a9a9a" stroke-width="1.8"/></svg>
<svg class="r" style="left:1563px;top:82px" width="10" height="12" viewBox="0 0 10 12"><path d="M7 2 L3 6 L7 10" fill="none" stroke="#9a9a9a" stroke-width="1.8"/></svg>
<svg class="r" style="left:1562px;top:103px" width="12" height="10" viewBox="0 0 12 10"><path d="M2 3 L6 7 L10 3" fill="none" stroke="#9a9a9a" stroke-width="1.8"/></svg>
<svg class="r" style="left:1563px;top:123px" width="10" height="12" viewBox="0 0 10 12"><path d="M3 2 L7 6 L3 10" fill="none" stroke="#9a9a9a" stroke-width="1.8"/></svg>
<svg class="r" style="left:1560px;top:141px" width="16" height="18" viewBox="0 0 16 18"><path d="M4.5 9 V5.5 Q4.5 2 8 2 Q11.5 2 11.5 5.5 V6.5" fill="none" stroke="#9a9a9a" stroke-width="1.9"/><rect x="1" y="9" width="14" height="8" fill="#9a9a9a"/><circle cx="8" cy="13" r="1.6" fill="#f5f5f5"/></svg>
<div class="r" style="left:17.00px;top:328.50px;width:1570.00px;height:376.00px;border:1px solid #b9b9b9;background:#fff;border-radius:0px;box-sizing:border-box;"></div>
<div class="r" style="left:151.50px;top:300.00px;width:395.50px;height:29.50px;border:1px solid #bdbdbd;background:#e4e4e4;border-radius:0px;box-sizing:border-box;border-radius:0 3px 0 0"></div>
<div class="r" style="left:17.00px;top:300.00px;width:135.50px;height:30.00px;border:1px solid #bdbdbd;background:#fff;border-radius:0px;box-sizing:border-box;border-bottom:none;border-radius:3px 3px 0 0"></div>
<div class="t" style="left:30.00px;top:306.85px;font-size:14px;line-height:14px;color:#404040;font-weight:normal;font-style:normal;">Табличная часть</div>
<div class="t" style="left:192.50px;top:306.85px;font-size:14px;line-height:14px;color:#404040;font-weight:normal;font-style:normal;">Групповое создание нераспознанной номенклатуры</div>
<svg class="r" style="left:163px;top:305px" width="18" height="18" viewBox="0 0 18 18"><rect x="0.7" y="1.5" width="13" height="14.2" fill="#e9edf2" stroke="#8294aa" stroke-width="1.1"/><path d="M2.8 4.5 H9 M2.8 7 H8 M2.8 9.5 H9 M2.8 12 H8" stroke="#b5bdc8" stroke-width="1"/><path d="M4.6 6.2 L16.4 16.8" stroke="#7d5f12" stroke-width="1.9" stroke-linecap="round"/><path d="M4.6 6.2 L10.2 11.2" stroke="#4aa3e2" stroke-width="1.9" stroke-linecap="round"/><circle cx="14.4" cy="2.4" r="1.5" fill="#e8501e"/><circle cx="7.6" cy="3.4" r="1.3" fill="#e8501e"/><circle cx="11.1" cy="5.6" r="1.3" fill="#e8501e"/></svg>
<div class="r" style="left:28.00px;top:339.00px;width:89.00px;height:27.00px;border:1px solid #bcbcbc;background:linear-gradient(#ffffff,#f2f2f2);border-radius:2px;box-sizing:border-box;box-shadow:0 1px 1px rgba(0,0,0,0.12)"></div>
<div class="t" style="left:-327.50px;width:800px;text-align:center;top:345.65px;font-size:14px;line-height:14px;color:#4a4a4a;font-weight:normal;font-style:normal;">Добавить</div>
<div class="r" style="left:137.00px;top:339.00px;width:63.00px;height:27.00px;border:1px solid #bcbcbc;background:linear-gradient(#ffffff,#f2f2f2);border-radius:2px;box-sizing:border-box;box-shadow:0 1px 1px rgba(0,0,0,0.12)"></div>
<div class="r" style="left:168.00px;top:340.00px;width:1.00px;height:25.50px;background:#d0d0d0;"></div>
<svg class="r" style="left:146px;top:346px" width="14" height="14" viewBox="0 0 14 14"><path d="M7 1 L13 7 L9.5 7 L9.5 13 L4.5 13 L4.5 7 L1 7 Z" fill="#3ea4e6"/></svg>
<svg class="r" style="left:176px;top:346px" width="14" height="14" viewBox="0 0 14 14"><path d="M7 13 L13 7 L9.5 7 L9.5 1 L4.5 1 L4.5 7 L1 7 Z" fill="#3ea4e6"/></svg>
<div class="r" style="left:1293.00px;top:339.00px;width:212.00px;height:29.00px;border:1px solid #a4a7ac;background:#fff;border-radius:3px;box-sizing:border-box;"></div>
<div class="r" style="left:1482.00px;top:340.00px;width:1.00px;height:26.50px;background:#a8a8a8;"></div>
<div class="t" style="left:1298.00px;top:345.65px;font-size:14px;line-height:14px;color:#b0b0b0;font-weight:normal;font-style:normal;">Поиск (Ctrl+F)</div>
<svg class="r" style="left:1489.5px;top:349.5px" width="7" height="7" viewBox="0 0 7 7"><path d="M1 1 L6 6 M6 1 L1 6" stroke="#777" stroke-width="1.3"/></svg>
<div class="r" style="left:1514.00px;top:339.00px;width:66.00px;height:27.00px;border:1px solid #bcbcbc;background:linear-gradient(#ffffff,#f2f2f2);border-radius:2px;box-sizing:border-box;box-shadow:0 1px 1px rgba(0,0,0,0.12)"></div>
<div class="r" style="left:1575.00px;top:338.00px;width:11.00px;height:30.00px;background:#fff;"></div>
<div class="t" style="left:1528.00px;top:345.65px;font-size:14px;line-height:14px;color:#4a4a4a;font-weight:normal;font-style:normal;">Еще</div>
<svg class="r" style="left:1562.5px;top:352.5px" width="6" height="3.5" viewBox="0 0 6 3.5"><path d="M0 0 H6 L3 3.5 Z" fill="#444"/></svg>
<div class="r" style="left:28.00px;top:377.00px;width:1547.00px;height:318.00px;border:1px solid #b5b5b5;background:#fff;border-radius:0px;box-sizing:border-box;"></div>
<div class="r" style="left:29.00px;top:378.00px;width:1545.00px;height:30.00px;background:#f2f2f2;"></div>
<div class="r" style="left:29.00px;top:408.00px;width:1545.00px;height:1.00px;background:#dcdcdc;"></div>
<div class="r" style="left:77.70px;top:378.00px;width:1.00px;height:30.00px;background:#d6d6d6;"></div>
<div class="r" style="left:78.70px;top:378.00px;width:1.00px;height:30.00px;background:#fbfbfb;"></div>
<div class="r" style="left:282.70px;top:378.00px;width:1.00px;height:30.00px;background:#d6d6d6;"></div>
<div class="r" style="left:283.70px;top:378.00px;width:1.00px;height:30.00px;background:#fbfbfb;"></div>
<div class="r" style="left:407.70px;top:378.00px;width:1.00px;height:30.00px;background:#d6d6d6;"></div>
<div class="r" style="left:408.70px;top:378.00px;width:1.00px;height:30.00px;background:#fbfbfb;"></div>
<div class="r" style="left:531.25px;top:378.00px;width:1.00px;height:30.00px;background:#d6d6d6;"></div>
<div class="r" style="left:532.25px;top:378.00px;width:1.00px;height:30.00px;background:#fbfbfb;"></div>
<div class="r" style="left:655.00px;top:378.00px;width:1.00px;height:30.00px;background:#d6d6d6;"></div>
<div class="r" style="left:656.00px;top:378.00px;width:1.00px;height:30.00px;background:#fbfbfb;"></div>
<div class="r" style="left:757.75px;top:378.00px;width:1.00px;height:30.00px;background:#d6d6d6;"></div>
<div class="r" style="left:758.75px;top:378.00px;width:1.00px;height:30.00px;background:#fbfbfb;"></div>
<div class="r" style="left:947.75px;top:378.00px;width:1.00px;height:30.00px;background:#d6d6d6;"></div>
<div class="r" style="left:948.75px;top:378.00px;width:1.00px;height:30.00px;background:#fbfbfb;"></div>
<div class="r" style="left:1147.75px;top:378.00px;width:1.00px;height:30.00px;background:#d6d6d6;"></div>
<div class="r" style="left:1148.75px;top:378.00px;width:1.00px;height:30.00px;background:#fbfbfb;"></div>
<div class="r" style="left:1347.75px;top:378.00px;width:1.00px;height:30.00px;background:#d6d6d6;"></div>
<div class="r" style="left:1348.75px;top:378.00px;width:1.00px;height:30.00px;background:#fbfbfb;"></div>
<div class="r" style="left:1547.00px;top:378.00px;width:1.00px;height:30.00px;background:#d6d6d6;"></div>
<div class="r" style="left:1548.00px;top:378.00px;width:1.00px;height:30.00px;background:#fbfbfb;"></div>
<div class="r" style="left:29.00px;top:410.00px;width:1545.00px;height:30.00px;background:#fdf0c4;"></div>
<div class="r" style="left:77.70px;top:410.00px;width:1.00px;height:29.50px;background:#fff9e8;"></div>
<div class="r" style="left:282.70px;top:410.00px;width:1.00px;height:29.50px;background:#fff9e8;"></div>
<div class="r" style="left:407.70px;top:410.00px;width:1.00px;height:29.50px;background:#fff9e8;"></div>
<div class="r" style="left:531.25px;top:410.00px;width:1.00px;height:29.50px;background:#fff9e8;"></div>
<div class="r" style="left:655.00px;top:410.00px;width:1.00px;height:29.50px;background:#fff9e8;"></div>
<div class="r" style="left:757.75px;top:410.00px;width:1.00px;height:29.50px;background:#fff9e8;"></div>
<div class="r" style="left:947.75px;top:410.00px;width:1.00px;height:29.50px;background:#fff9e8;"></div>
<div class="r" style="left:1147.75px;top:410.00px;width:1.00px;height:29.50px;background:#fff9e8;"></div>
<div class="r" style="left:1347.75px;top:410.00px;width:1.00px;height:29.50px;background:#fff9e8;"></div>
<div class="r" style="left:1547.00px;top:410.00px;width:1.00px;height:29.50px;background:#fff9e8;"></div>
<div class="r" style="left:79.00px;top:411.50px;width:204.00px;height:28.00px;border:1px solid #fdca22;background:#ffe48f;border-radius:0px;box-sizing:border-box;border-width:2px"></div>
<div class="r" style="left:29.00px;top:440.00px;width:1545.00px;height:1.00px;background:#e4e6ea;"></div>
<div class="r" style="left:29.00px;top:470.50px;width:1545.00px;height:1.00px;background:#e4e6ea;"></div>
<div class="r" style="left:29.00px;top:500.90px;width:1545.00px;height:1.00px;background:#e4e6ea;"></div>
<div class="r" style="left:29.00px;top:531.80px;width:1545.00px;height:1.00px;background:#e4e6ea;"></div>
<div class="r" style="left:29.00px;top:591.50px;width:1545.00px;height:1.00px;background:#e4e6ea;"></div>
<div class="t" style="left:38.30px;top:385.15px;font-size:14px;line-height:14px;color:#5c5c5c;font-weight:normal;font-style:normal;">№</div>
<div class="t" style="left:87.90px;top:385.15px;font-size:14px;line-height:14px;color:#5c5c5c;font-weight:normal;font-style:normal;">Номенклатура</div>
<div class="t" style="left:292.50px;top:385.15px;font-size:14px;line-height:14px;color:#5c5c5c;font-weight:normal;font-style:normal;">Количество</div>
<div class="t" style="left:417.50px;top:385.15px;font-size:14px;line-height:14px;color:#5c5c5c;font-weight:normal;font-style:normal;">Цена</div>
<div class="t" style="left:541.00px;top:385.15px;font-size:14px;line-height:14px;color:#5c5c5c;font-weight:normal;font-style:normal;">Сумма</div>
<div class="t" style="left:665.75px;top:385.15px;font-size:14px;line-height:14px;color:#5c5c5c;font-weight:normal;font-style:normal;">% НДС</div>
<div class="t" style="left:767.50px;top:385.15px;font-size:14px;line-height:14px;color:#5c5c5c;font-weight:normal;font-style:normal;">Сумма НДС</div>
<div class="t" style="left:958.00px;top:385.15px;font-size:14px;line-height:14px;color:#5c5c5c;font-weight:normal;font-style:normal;">Всего</div>
<div class="t" style="left:1158.00px;top:385.15px;font-size:14px;line-height:14px;color:#5c5c5c;font-weight:normal;font-style:normal;">Страна происхождения</div>
<div class="t" style="left:1357.00px;top:385.15px;font-size:14px;line-height:14px;color:#5c5c5c;font-weight:normal;font-style:normal;">Номер ГТД</div>
<div class="t" style="right:1529.50px;top:418.15px;font-size:14px;line-height:14px;color:#505050;font-weight:normal;font-style:normal;">1</div>
<div class="t" style="left:87.90px;top:418.15px;font-size:14px;line-height:14px;color:#505050;font-weight:normal;font-style:normal;">Печенье шоколадное</div>
<div class="t" style="right:1200.00px;top:418.15px;font-size:14px;line-height:14px;color:#505050;font-weight:normal;font-style:normal;">107,000</div>
<div class="t" style="right:1076.50px;top:418.15px;font-size:14px;line-height:14px;color:#505050;font-weight:normal;font-style:normal;">152,54</div>
<div class="t" style="right:952.50px;top:418.15px;font-size:14px;line-height:14px;color:#505050;font-weight:normal;font-style:normal;">16 322,03</div>
<div class="t" style="left:665.75px;top:418.15px;font-size:14px;line-height:14px;color:#505050;font-weight:normal;font-style:normal;">18%</div>
<div class="t" style="right:659.50px;top:418.15px;font-size:14px;line-height:14px;color:#505050;font-weight:normal;font-style:normal;">2 937,97</div>
<div class="t" style="right:459.50px;top:418.15px;font-size:14px;line-height:14px;color:#505050;font-weight:normal;font-style:normal;">19 260,00</div>
<div class="t" style="right:1529.50px;top:448.75px;font-size:14px;line-height:14px;color:#505050;font-weight:normal;font-style:normal;">2</div>
<div class="t" style="left:87.90px;top:448.75px;font-size:14px;line-height:14px;color:#505050;font-weight:normal;font-style:normal;">Миникруассаны классиче…</div>
<div class="t" style="right:1200.00px;top:448.75px;font-size:14px;line-height:14px;color:#505050;font-weight:normal;font-style:normal;">40,000</div>
<div class="t" style="right:1076.50px;top:448.75px;font-size:14px;line-height:14px;color:#505050;font-weight:normal;font-style:normal;">296,61</div>
<div class="t" style="right:952.50px;top:448.75px;font-size:14px;line-height:14px;color:#505050;font-weight:normal;font-style:normal;">11 864,41</div>
<div class="t" style="left:665.75px;top:448.75px;font-size:14px;line-height:14px;color:#505050;font-weight:normal;font-style:normal;">18%</div>
<div class="t" style="right:659.50px;top:448.75px;font-size:14px;line-height:14px;color:#505050;font-weight:normal;font-style:normal;">2 135,59</div>
<div class="t" style="right:459.50px;top:448.75px;font-size:14px;line-height:14px;color:#505050;font-weight:normal;font-style:normal;">14 000,00</div>
<div class="t" style="right:1529.50px;top:479.15px;font-size:14px;line-height:14px;color:#505050;font-weight:normal;font-style:normal;">3</div>
<div class="t" style="left:87.90px;top:479.15px;font-size:14px;line-height:14px;color:#505050;font-weight:normal;font-style:normal;">Пирог тирольский с черни…</div>
<div class="t" style="right:1200.00px;top:479.15px;font-size:14px;line-height:14px;color:#505050;font-weight:normal;font-style:normal;">19,000</div>
<div class="t" style="right:1076.50px;top:479.15px;font-size:14px;line-height:14px;color:#505050;font-weight:normal;font-style:normal;">169,49</div>
<div class="t" style="right:952.50px;top:479.15px;font-size:14px;line-height:14px;color:#505050;font-weight:normal;font-style:normal;">3 220,34</div>
<div class="t" style="left:665.75px;top:479.15px;font-size:14px;line-height:14px;color:#505050;font-weight:normal;font-style:normal;">18%</div>
<div class="t" style="right:659.50px;top:479.15px;font-size:14px;line-height:14px;color:#505050;font-weight:normal;font-style:normal;">579,66</div>
<div class="t" style="right:459.50px;top:479.15px;font-size:14px;line-height:14px;color:#505050;font-weight:normal;font-style:normal;">3 800,00</div>
<div class="t" style="right:1529.50px;top:509.95px;font-size:14px;line-height:14px;color:#505050;font-weight:normal;font-style:normal;">4</div>
<div class="t" style="left:87.90px;top:509.95px;font-size:14px;line-height:14px;color:#505050;font-weight:normal;font-style:normal;">Конфеты "Батончик"</div>
<div class="t" style="right:1200.00px;top:509.95px;font-size:14px;line-height:14px;color:#505050;font-weight:normal;font-style:normal;">119,000</div>
<div class="t" style="right:1076.50px;top:509.95px;font-size:14px;line-height:14px;color:#505050;font-weight:normal;font-style:normal;">127,12</div>
<div class="t" style="right:952.50px;top:509.95px;font-size:14px;line-height:14px;color:#505050;font-weight:normal;font-style:normal;">15 127,12</div>
<div class="t" style="left:665.75px;top:509.95px;font-size:14px;line-height:14px;color:#505050;font-weight:normal;font-style:normal;">18%</div>
<div class="t" style="right:659.50px;top:509.95px;font-size:14px;line-height:14px;color:#505050;font-weight:normal;font-style:normal;">2 722,88</div>
<div class="t" style="right:459.50px;top:509.95px;font-size:14px;line-height:14px;color:#505050;font-weight:normal;font-style:normal;">17 850,00</div>
<div class="t" style="right:1529.50px;top:540.15px;font-size:14px;line-height:14px;color:#505050;font-weight:normal;font-style:normal;">5</div>
<div class="t" style="left:87.90px;top:540.15px;font-size:14px;line-height:14px;color:#505050;font-weight:normal;font-style:normal;">Доставка товара</div>
<div class="t" style="right:1200.00px;top:540.15px;font-size:14px;line-height:14px;color:#505050;font-weight:normal;font-style:normal;">1,000</div>
<div class="t" style="right:1076.50px;top:540.15px;font-size:14px;line-height:14px;color:#505050;font-weight:normal;font-style:normal;">2 542,37</div>
<div class="t" style="right:952.50px;top:540.15px;font-size:14px;line-height:14px;color:#505050;font-weight:normal;font-style:normal;">2 542,37</div>
<div class="t" style="left:665.75px;top:540.15px;font-size:14px;line-height:14px;color:#505050;font-weight:normal;font-style:normal;">18%</div>
<div class="t" style="right:659.50px;top:540.15px;font-size:14px;line-height:14px;color:#505050;font-weight:normal;font-style:normal;">457,63</div>
<div class="t" style="right:459.50px;top:540.15px;font-size:14px;line-height:14px;color:#505050;font-weight:normal;font-style:normal;">3 000,00</div>
<div class="t" style="left:87.90px;top:571.45px;font-size:14px;line-height:14px;color:#505050;font-weight:normal;font-style:italic;">Доставка товара</div>
<div class="t" style="left:980.00px;top:729.75px;font-size:14px;line-height:14px;color:#595959;font-weight:normal;font-style:normal;">Сумма:</div>
<div class="r" style="left:1038.00px;top:724.00px;width:107.00px;height:25.50px;border:1px solid #a4a7ac;background:#fff;border-radius:3px;box-sizing:border-box;"></div>
<div class="t" style="left:1177.20px;top:729.75px;font-size:14px;line-height:14px;color:#595959;font-weight:normal;font-style:normal;">Сумма НДС:</div>
<div class="r" style="left:1269.20px;top:724.00px;width:106.30px;height:25.50px;border:1px solid #a4a7ac;background:#fff;border-radius:3px;box-sizing:border-box;"></div>
<div class="t" style="left:1408.40px;top:729.75px;font-size:14px;line-height:14px;color:#595959;font-weight:normal;font-style:normal;">Всего:</div>
<div class="r" style="left:1459.30px;top:724.00px;width:105.50px;height:25.50px;border:1px solid #a4a7ac;background:#fff;border-radius:3px;box-sizing:border-box;"></div>
<div class="t" style="right:459.70px;top:729.75px;font-size:14px;line-height:14px;color:#555;font-weight:normal;font-style:normal;">49 076,27</div>
<div class="t" style="right:229.20px;top:729.75px;font-size:14px;line-height:14px;color:#555;font-weight:normal;font-style:normal;">8 833,73</div>
<div class="t" style="right:39.20px;top:729.75px;font-size:14px;line-height:14px;color:#555;font-weight:normal;font-style:normal;">57 910,00</div>
<svg class="r" style="left:1596px;top:67px" width="6" height="5" viewBox="0 0 6 5"><path d="M0.5 4 L3 1.3 L5.5 4" fill="none" stroke="#a8a8a8" stroke-width="1.3"/></svg>
<div class="r" style="left:1597.00px;top:82.50px;width:3.00px;height:107.50px;background:#dcdcdc;border-radius:4px 0 0 0"></div>
<div class="r" style="left:1596.80px;top:190.00px;width:3.20px;height:544.00px;background:#8f8f8f;border-radius:0 0 0 4px"></div>
<svg class="r" style="left:1596px;top:743px" width="6" height="5" viewBox="0 0 6 5"><path d="M0.5 1 L3 3.7 L5.5 1" fill="none" stroke="#a8a8a8" stroke-width="1.3"/></svg>
</body></html>
